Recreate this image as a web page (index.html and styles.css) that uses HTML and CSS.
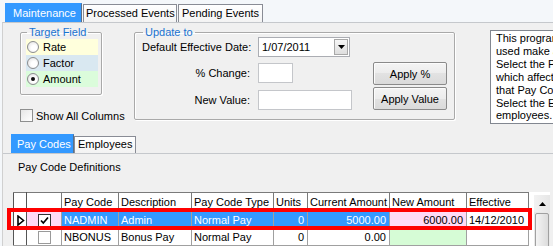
FILE: index.html
```html
<!DOCTYPE html>
<html lang="en">
<head>
  <meta charset="UTF-8">
  <meta name="viewport" content="width=device-width, initial-scale=1.0">
  <title>Pay Code Maintenance</title>
  <link rel="stylesheet" href="styles.css">
</head>
<body>
  <div class="window">
    <!-- Main tabs -->
    <div class="top-tabs">
      <div class="tab tab-maint active">Maintenance</div>
      <div class="tab tab-processed">Processed Events</div>
      <div class="tab tab-pending">Pending Events</div>
    </div>

    <div class="tab-page">
      <div class="settings">
        <div class="left-col">
          <fieldset class="group target">
            <legend>Target Field</legend>
            <label class="opt rate"><span class="radio"></span>Rate</label>
            <label class="opt factor"><span class="radio"></span>Factor</label>
            <label class="opt amount"><span class="radio checked"></span>Amount</label>
          </fieldset>
          <label class="check-row"><span class="checkbox"></span>Show All Columns</label>
        </div>

        <fieldset class="group update">
          <legend>Update to</legend>
          <div class="update-grid">
            <div class="field-label row-1">Default Effective Date:</div>
            <div class="combo row-1">
              <span class="combo-text">1/07/2011</span>
              <span class="combo-btn">
                <svg width="7" height="4" viewBox="0 0 7 4"><path d="M0 0h7L3.5 4z" fill="#000"/></svg>
              </span>
            </div>
            <div class="field-label row-2">% Change:</div>
            <div class="textbox short row-2"></div>
            <div class="field-label row-3">New Value:</div>
            <div class="textbox row-3"></div>
            <div class="buttons">
              <button class="btn">Apply %</button>
              <button class="btn">Apply Value</button>
            </div>
          </div>
        </fieldset>

        <div class="help">
          This program is<br>
          used make a bulk<br>
          Select the Pay Code<br>
          which affects the<br>
          that Pay Code.<br>
          Select the Employees<br>
          employees.
        </div>
      </div>

      <!-- Sub tabs -->
      <div class="sub-tabs">
        <div class="tab tab-codes active">Pay Codes</div>
        <div class="tab tab-emps">Employees</div>
      </div>

      <div class="sub-page">
        <div class="caption">Pay Code Definitions</div>
        <div class="grid-wrap">
          <table class="grid">
            <colgroup>
              <col style="width:13px">
              <col style="width:35px">
              <col style="width:57px">
              <col style="width:73px">
              <col style="width:82px">
              <col style="width:34px">
              <col style="width:82px">
              <col style="width:77px">
              <col style="width:62px">
            </colgroup>
            <thead>
              <tr>
                <th class="rowhead"></th>
                <th></th>
                <th>Pay Code</th>
                <th>Description</th>
                <th>Pay Code Type</th>
                <th>Units</th>
                <th>Current Amount</th>
                <th>New Amount</th>
                <th>Effective</th>
              </tr>
            </thead>
            <tbody>
              <tr class="selected">
                <td class="rowhead">
                  <svg width="8" height="11" viewBox="0 0 8 11"><path d="M1 1l5.5 4.5L1 10z" fill="#fff" stroke="#000" stroke-width="1.6"/></svg>
                </td>
                <td class="check-cell pink"><span class="checkbox small on">
                  <svg width="9" height="9" viewBox="0 0 9 9"><path d="M1 4.5l2.3 2.5L8 1.5" fill="none" stroke="#000" stroke-width="1.7"/></svg>
                </span></td>
                <td class="sel">NADMIN</td>
                <td class="sel">Admin</td>
                <td class="sel">Normal Pay</td>
                <td class="sel num">0</td>
                <td class="sel num">5000.00</td>
                <td class="pink num">6000.00</td>
                <td>14/12/2010</td>
              </tr>
              <tr>
                <td class="rowhead"></td>
                <td class="check-cell"><span class="checkbox small"></span></td>
                <td>NBONUS</td>
                <td>Bonus Pay</td>
                <td>Normal Pay</td>
                <td class="num">0</td>
                <td class="num">0.00</td>
                <td class="green"></td>
                <td></td>
              </tr>
              <tr>
                <td class="rowhead"></td>
                <td></td><td></td><td></td><td></td><td></td><td></td><td></td><td></td>
              </tr>
            </tbody>
          </table>
          <div class="scrollbar">
            <div class="scroll-up">
              <svg width="7" height="4" viewBox="0 0 7 4"><path d="M0 4h7L3.5 0z" fill="#000"/></svg>
            </div>
            <div class="scroll-thumb"></div>
          </div>
          <!-- Highlight around the selected row -->
          <div class="highlight"></div>
        </div>
      </div>
    </div>
  </div>
</body>
</html>
```

FILE: styles.css
```css
body {
  margin: 0;
  background-color: #f0f0f0;
  font-family: "Liberation Sans", Arial, sans-serif;
  font-size: 11px;
  color: #000;
}

.window {
  width: 553px;
  height: 246px;
  overflow: hidden;
  background-color: #f4f7fa;
}

/* Tabs */
.top-tabs,
.sub-tabs {
  display: flex;
  align-items: flex-end;
}

.top-tabs {
  height: 19px;
  padding: 3px 0 0 5px;
}

.tab {
  box-sizing: border-box;
  height: 18px;
  line-height: 17px;
  border: 1px solid #898c95;
  border-bottom: none;
  background: linear-gradient(#ffffff, #f3f3f3);
  white-space: nowrap;
}

.tab.active {
  height: 19px;
  line-height: 18px;
  background: #3399ff;
  border-color: #3399ff;
  border-right-color: #5a6f88;
  color: #fff;
}

.tab-maint { width: 77px; padding-left: 7px; }
.tab-processed { width: 94px; padding-left: 2px; margin-left: 1px; }
.tab-pending { width: 85px; padding-left: 3px; margin-left: 1px; }

.tab-page {
  height: 230px;
  margin-left: 2px;
  border-top: 1px solid #c5c8cc;
  border-left: 1px solid #d0d0d0;
  background-color: #f0f0f0;
}

/* Top settings area */
.settings {
  display: flex;
  align-items: flex-start;
  padding: 3px 0 0 17px;
}

.left-col {
  flex-shrink: 0;
  width: 82px;
}

.group {
  box-sizing: border-box;
  margin: 0;
  padding: 0;
  border: 1px solid #a9a9a9;
  border-radius: 2px;
  box-shadow: inset 1px 1px #fff, 1px 1px #fff;
}

.group legend {
  margin-left: 1px;
  padding: 0 2px;
  line-height: 13px;
  color: #1a73d0;
}

.target {
  width: 82px;
  padding: 0 0 7px 5px;
}

.opt {
  display: flex;
  align-items: center;
  gap: 4px;
  width: 72px;
  height: 16px;
  padding-left: 1px;
  box-sizing: border-box;
}

.rate { background-color: #ffffdc; }
.factor { background-color: #d9e8f1; }
.amount { background-color: #dbfcdb; }

.radio {
  flex-shrink: 0;
  box-sizing: border-box;
  width: 12px;
  height: 12px;
  border: 1px solid #8b8d8f;
  border-radius: 50%;
  background: radial-gradient(circle at 60% 60%, #ffffff 30%, #dcdcdc);
  display: flex;
  align-items: center;
  justify-content: center;
}

.radio.checked::after {
  content: "";
  width: 4px;
  height: 4px;
  border-radius: 50%;
  background-color: #111;
}

.checkbox {
  flex-shrink: 0;
  box-sizing: border-box;
  display: inline-flex;
  align-items: center;
  justify-content: center;
  width: 13px;
  height: 13px;
  border: 1px solid #8e8f8f;
  background: linear-gradient(135deg, #e6e6e6, #ffffff);
}

.check-row {
  display: flex;
  align-items: center;
  gap: 3px;
  margin-top: 14px;
  white-space: nowrap;
  height: 13px;
}

.update {
  flex-shrink: 0;
  width: 321px;
  margin-left: 32px;
  padding: 0 0 9px 7px;
}

.update-grid {
  display: grid;
  grid-template-columns: 108px 94px 74px;
  grid-template-rows: 26px 27px 20px;
  column-gap: 8px;
  margin-top: -2px;
}

.row-1 { grid-row: 1; }
.row-2 { grid-row: 2; }
.row-3 { grid-row: 3; }

.field-label {
  grid-column: 1;
  height: 20px;
  line-height: 20px;
  text-align: right;
  white-space: nowrap;
}

.combo {
  grid-column: 2;
  box-sizing: border-box;
  display: flex;
  align-items: center;
  width: 92px;
  height: 20px;
  border: 1px solid #abadb3;
  background-color: #fff;
}

.combo-text {
  flex-grow: 1;
  padding-left: 3px;
}

.combo-btn {
  box-sizing: border-box;
  display: flex;
  align-items: center;
  justify-content: center;
  width: 14px;
  height: 16px;
  margin-right: 1px;
  border: 1px solid #a8a8a8;
  background: linear-gradient(#f6f6f6, #dedede);
}

.textbox {
  grid-column: 2;
  box-sizing: border-box;
  width: 94px;
  height: 20px;
  border: 1px solid #c4c6ca;
  background-color: #fff;
}

.textbox.short {
  width: 35px;
}

.buttons {
  grid-column: 3;
  grid-row: 2 / span 2;
  display: flex;
  flex-direction: column;
  gap: 2px;
  margin: -1px 0 0 13px;
}

.btn {
  box-sizing: border-box;
  width: 74px;
  height: 24px;
  padding: 0;
  font-family: inherit;
  font-size: 11px;
  color: #000;
  border: 1px solid #8a8a8a;
  border-radius: 2px;
  background: linear-gradient(#f4f4f4, #ececec 50%, #e2e2e2 50%, #dadada);
  box-shadow: inset 1px 1px #fcfcfc;
}

.help {
  flex-shrink: 0;
  box-sizing: border-box;
  width: 90px;
  height: 94px;
  margin: 4px 0 0 35px;
  padding: 1px 5px;
  border: 1px solid #828790;
  background-color: #fff;
  line-height: 12.9px;
  white-space: nowrap;
  overflow: hidden;
}

/* Sub tabs and grid */
.sub-tabs {
  height: 19px;
  margin: 10px 0 0 8px;
}

.tab-codes { width: 63px; padding-left: 5px; }
.tab-emps { width: 62px; height: 17px; line-height: 15px; padding-left: 3px; }

.sub-page {
  border-top: 1px solid #c5c8cc;
  padding: 7px 0 0 10px;
}

.caption {
  line-height: 13px;
  padding-left: 5px;
}

.grid-wrap {
  position: relative;
  display: flex;
  align-items: flex-start;
  width: 537px;
  height: 60px;
  margin-top: 18px;
  background-color: #fff;
}

.grid {
  flex-shrink: 0;
  width: 515px;
  table-layout: fixed;
  border-collapse: collapse;
}

.grid th,
.grid td {
  border: 1px solid #a0a0a0;
  padding: 0 3px 0 2px;
  white-space: nowrap;
  overflow: hidden;
  text-align: left;
  font-weight: normal;
}

.grid th {
  height: 18px;
  border-color: #7a7a7a;
}

.grid td {
  height: 16px;
}

.grid .rowhead {
  padding: 0 0 0 3px;
  border-right-color: #555;
  border-left-color: #555;
}

.grid .rowhead svg {
  display: block;
}

.grid .num {
  text-align: right;
}

.grid .sel {
  background-color: #3399ff;
  color: #fff;
}

.grid .pink {
  background-color: #ffdaf5;
}

.grid .green {
  background-color: #d6fcd6;
}

.grid .check-cell {
  text-align: center;
  padding: 0;
}

.checkbox.small {
  vertical-align: middle;
  background: #fff;
  border-color: #9a9a9a;
}

.checkbox.small.on {
  border-color: #333;
}

.scrollbar {
  flex-shrink: 0;
  width: 16px;
  height: 60px;
  margin: 3px 0 0 5px;
  background-color: #e9e9e9;
}

.scroll-up {
  display: flex;
  align-items: center;
  justify-content: center;
  height: 17px;
  background: linear-gradient(90deg, #f2f2f2, #e6e6e6);
}

.scroll-thumb {
  height: 40px;
  margin: 1px 1px 0;
  border: 1px solid #a0a0a0;
  border-radius: 2px;
  background: linear-gradient(90deg, #f4f4f4, #dcdcdc);
}

.highlight {
  position: absolute;
  left: -6px;
  top: 16px;
  box-sizing: border-box;
  width: 525px;
  height: 22px;
  border: 4px solid #ff0000;
  pointer-events: none;
}
```
